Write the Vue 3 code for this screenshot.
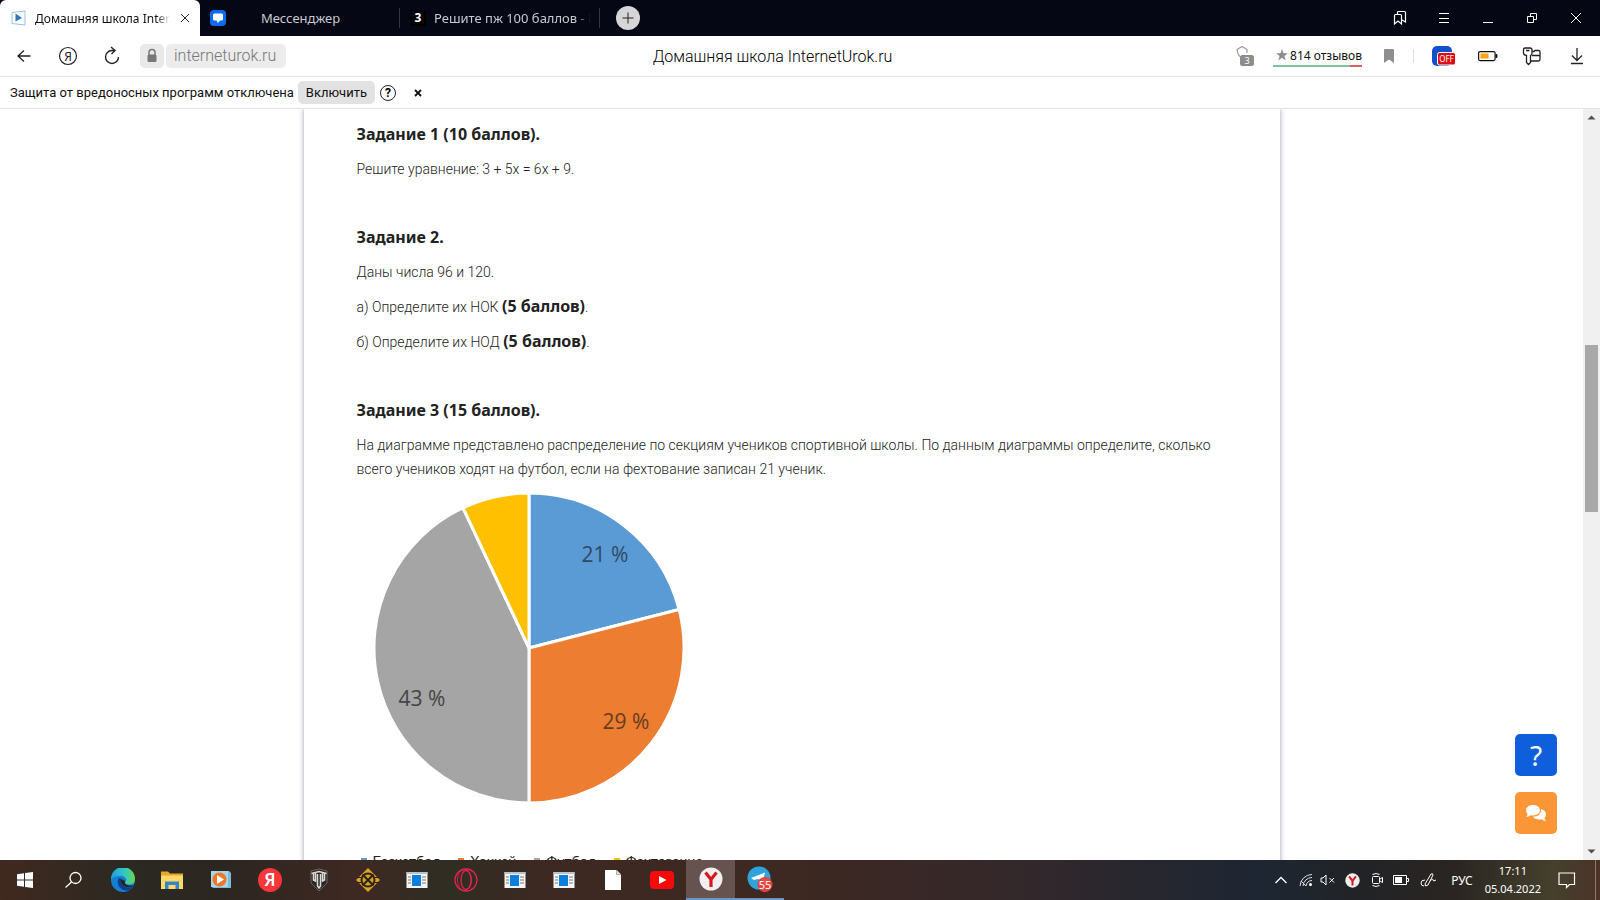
<template>
  <div class="desktop">
    <header class="tabs">
      <div class="tab active">
        <svg class="favicon" width="16" height="16" viewBox="0 0 16 16">
          <path d="M1 2.5L14 1V15L1 13.5Z" fill="#fff" stroke="#8cc4e8" stroke-width="1" />
          <path d="M4.5 3.5V11.5L11 8Z" fill="#2f78b4" />
        </svg>
        <span class="tab-title fade">Домашняя школа InternetUrok.ru</span>
        <button class="tab-close" aria-label="Закрыть">
          <svg width="10" height="10" viewBox="0 0 10 10"><path d="M1 1L9 9M9 1L1 9" stroke="#222" /></svg>
        </button>
      </div>
      <div class="tab messenger">
        <svg class="favicon" width="16" height="16" viewBox="0 0 16 16">
          <rect width="16" height="16" rx="4" fill="#0a6cf0" />
          <path d="M4.5 3.5H11.5Q13 3.5 13 5V9Q13 10.5 11.5 10.5H10L8 13L6.5 10.5H4.5Q3 10.5 3 9V5Q3 3.5 4.5 3.5Z" fill="#fff" />
        </svg>
        <span class="tab-title">Мессенджер</span>
      </div>
      <div class="tab">
        <span class="znanija">3</span>
        <span class="tab-title fade">Решите пж 100 баллов - Школьные Знания</span>
      </div>
      <button class="new-tab" aria-label="Новая вкладка">
        <svg width="12" height="12" viewBox="0 0 12 12"><path d="M6 0.5V11.5M0.5 6H11.5" stroke="#222" /></svg>
      </button>
      <div class="window-controls">
        <button aria-label="Коллекции">
          <svg width="16" height="16" viewBox="0 0 16 16" fill="none" stroke="#fff" stroke-width="1.2">
            <path d="M2.500 5.500Q2.500 4.500 3.500 4.500H8.500Q9.500 4.500 9.500 5.500V14L6 11L2.500 14Z" />
            <path d="M5.500 4V2.500Q5.500 1.500 6.500 1.500H12.500Q13.500 1.500 13.500 2.500V12L10 10" />
          </svg>
        </button>
        <button aria-label="Меню">
          <svg width="12" height="12" viewBox="0 0 12 12"><path d="M1 1.500H11M1 6.500H11M1 10.500H11" stroke="#fff" /></svg>
        </button>
        <button aria-label="Свернуть">
          <svg width="12" height="12" viewBox="0 0 12 12"><path d="M1 10.500H11" stroke="#fff" /></svg>
        </button>
        <button aria-label="Развернуть">
          <svg width="12" height="12" viewBox="0 0 12 12" fill="none" stroke="#fff">
            <path d="M1.500 4.500H7.500V10.500H1.500ZM4.500 4.500V1.500H10.500V7.500H7.500" />
          </svg>
        </button>
        <button aria-label="Закрыть окно">
          <svg width="12" height="12" viewBox="0 0 12 12"><path d="M1 1L11 11M11 1L1 11" stroke="#fff" /></svg>
        </button>
      </div>
    </header>

    <nav class="toolbar">
      <button class="nav-btn" aria-label="Назад">
        <svg width="18" height="18" viewBox="0 0 18 18" fill="none" stroke="#222" stroke-width="1.300"><path d="M15.500 9H3M9 3.500L3 9L9 14.500" /></svg>
      </button>
      <button class="nav-btn" aria-label="Яндекс">
        <svg width="20" height="20" viewBox="0 0 20 20">
          <circle cx="10" cy="10" r="8.500" fill="none" stroke="#222" stroke-width="1.200" />
          <text x="10" y="14.500" text-anchor="middle" font-size="12" fill="#222">Я</text>
        </svg>
      </button>
      <button class="nav-btn" aria-label="Обновить">
        <svg width="18" height="20" viewBox="0 0 18 20" fill="none" stroke="#222" stroke-width="1.400">
          <path d="M11 4.500H9A6.500 6.500 0 1 0 15.500 11M8 1L12 4.500L8.500 8" />
        </svg>
      </button>
      <span class="lock">
        <svg width="12" height="16" viewBox="0 0 12 16">
          <path d="M3 7V4.500A3 3 0 0 1 9 4.500V7" fill="none" stroke="#777" stroke-width="1.500" />
          <rect x="1.500" y="6.500" width="9" height="7.500" rx="1.500" fill="#777" />
        </svg>
      </span>
      <input class="url" type="text" value="interneturok.ru" aria-label="Адрес">
      <span class="page-title">Домашняя школа InternetUrok.ru</span>
      <span class="shield">
        <svg width="20" height="22" viewBox="0 0 20 22">
          <path d="M6.500 13Q2.500 10 2 4.500L7 1.500L12 4.500V8" fill="none" stroke="#999" stroke-width="1.200" />
          <rect x="5" y="10" width="14" height="11" rx="2.500" fill="#8c8c8c" />
          <text x="12" y="19" text-anchor="middle" font-size="9" fill="#fff">3</text>
        </svg>
      </span>
      <a class="reviews" href="#">
        <svg width="12" height="12" viewBox="0 0 12 12"><path d="M6 0L7.500 4.300H12L8.400 7L9.700 11.500L6 8.800L2.300 11.500L3.600 7L0 4.300H4.500Z" fill="#8c8c8c" /></svg>
        814 отзывов
      </a>
      <button class="bookmark" aria-label="Закладка">
        <svg width="10" height="14" viewBox="0 0 10 14"><path d="M0 1Q0 0 1 0H9Q10 0 10 1V14L5 10.500L0 14Z" fill="#8e8e8e" /></svg>
      </button>
      <button class="ext-btn vpn" aria-label="Расширение">
        <svg width="26" height="22" viewBox="0 0 26 22">
          <rect x="1" y="1" width="20" height="20" rx="5" fill="#1450cc" />
          <rect x="6.500" y="7.500" width="18" height="12.500" rx="2" fill="#dd0b12" stroke="#fff" />
          <text x="15.500" y="17" text-anchor="middle" font-size="8" fill="#fff">OFF</text>
        </svg>
      </button>
      <button class="ext-btn" aria-label="Энергосбережение">
        <svg width="20" height="12" viewBox="0 0 20 12">
          <rect x="0.600" y="1.600" width="16.500" height="9" rx="1.500" fill="none" stroke="#111" stroke-width="1.200" />
          <rect x="2.500" y="3.500" width="8" height="5" fill="#ffa20d" />
          <rect x="17.500" y="4" width="2" height="4" rx="1" fill="#111" />
        </svg>
      </button>
      <button class="ext-btn" aria-label="Пароли">
        <svg width="20" height="20" viewBox="0 0 20 20" fill="none" stroke="#222" stroke-width="1.300">
          <path d="M3 2H8Q10 2 10 4V7Q10 9 8.500 9.500V16.500L6.500 18.500L4.500 16.500V9.500Q1.500 9 1.500 7V4Q1.500 2 3 2ZM4 4.500H7.500" />
          <path d="M10 5.500H12L13 4.500H16.500Q18 4.500 18 6V13Q18 15 16.500 15H8.500M10 9.500H18" />
        </svg>
      </button>
      <button class="ext-btn" aria-label="Загрузки">
        <svg width="14" height="18" viewBox="0 0 14 18" fill="none" stroke="#222" stroke-width="1.300"><path d="M7 1V13M2 8.500L7 13.500L12 8.500M1 16.500H13" /></svg>
      </button>
    </nav>

    <div class="notice">
      <span>Защита от вредоносных программ отключена</span>
      <button class="enable">Включить</button>
      <button class="help" aria-label="Справка">?</button>
      <button class="dismiss" aria-label="Скрыть">
        <svg width="8" height="8" viewBox="0 0 8 8"><path d="M1 1L7 7M7 1L1 7" stroke="#111" stroke-width="1.800" /></svg>
      </button>
    </div>

    <div class="viewport">
      <main class="page">
        <article class="sheet">
          <section class="task">
            <h2>Задание 1 (10 баллов).</h2>
            <p>Решите уравнение: 3 + 5x = 6x + 9.</p>
          </section>
          <section class="task">
            <h2>Задание 2.</h2>
            <p>Даны числа 96 и 120.</p>
            <p>а) Определите их НОК <strong>(5 баллов)</strong>.</p>
            <p>б) Определите их НОД <strong>(5 баллов)</strong>.</p>
          </section>
          <section class="task">
            <h2>Задание 3 (15 баллов).</h2>
            <p>
              На диаграмме представлено распределение по секциям учеников спортивной школы. По данным диаграммы
              определите, сколько всего учеников ходят на футбол, если на фехтование записан 21 ученик.
            </p>
            <figure class="chart">
              <svg class="pie" width="312" height="312" viewBox="-156 -156 312 312">
                <path v-for="s in slices" :key="s.name" :d="s.path" :fill="s.color" stroke="#fff" stroke-width="3" stroke-linejoin="round" />
                <text
                  v-for="s in labelled"
                  :key="s.label"
                  :x="s.x"
                  :y="s.y"
                  :fill="s.ink"
                  text-anchor="middle"
                >{{ s.label }}</text>
              </svg>
              <ul class="legend">
                <li v-for="s in slices" :key="s.name">
                  <i :style="{ background: s.color }"></i>{{ s.name }}
                </li>
              </ul>
            </figure>
          </section>
        </article>
        <div class="floating">
          <button class="float-btn ask" aria-label="Помощь">?</button>
          <button class="float-btn chat" aria-label="Чат">
            <svg width="22" height="18" viewBox="0 0 22 18" fill="#fff">
              <path d="M8 1C12 1 15 3.200 15 6.300S12 11.500 8 11.500Q6.500 11.500 5.500 11.200Q3.500 13 1 13Q2.500 11.500 2.500 10Q1 8.500 1 6.300C1 3.200 4 1 8 1Z" />
              <path d="M16.300 5Q21 6.500 21 10.500Q21 12.500 19.500 14Q19.500 15.500 21 17Q18.500 17 16.500 15.300Q10.500 16.500 8 12.800Q16 12.500 16.300 5Z" />
            </svg>
          </button>
        </div>
      </main>
      <div class="scrollbar">
        <svg width="17" height="17" viewBox="0 0 17 17"><path d="M4.500 10.500L8.500 6.500L12.500 10.500Z" fill="#505050" /></svg>
        <span class="before"></span>
        <span class="thumb"></span>
        <span class="after"></span>
        <svg width="17" height="17" viewBox="0 0 17 17"><path d="M4.500 6.500L8.500 10.500L12.500 6.500Z" fill="#505050" /></svg>
      </div>
    </div>

    <footer class="taskbar">
      <button class="app" aria-label="Пуск">
        <svg width="16" height="16" viewBox="0 0 16 16" fill="#fff"><path d="M0 2.200L7 1.200V7.500H0ZM8 1.100L16 0V7.500H8ZM0 8.500H7V14.800L0 13.800ZM8 8.500H16V16L8 14.900Z" /></svg>
      </button>
      <button class="app" aria-label="Поиск">
        <svg width="18" height="18" viewBox="0 0 18 18" fill="none" stroke="#fff" stroke-width="1.300"><circle cx="10.500" cy="7" r="5.500" /><path d="M6.500 11L0.500 16.500" /></svg>
      </button>
      <button class="app" aria-label="Edge">
        <svg width="24" height="24" viewBox="0 0 24 24">
          <defs>
            <linearGradient id="edge-top" x1="0" x2="1"><stop offset="0" stop-color="#1c9fe0" /><stop offset="0.600" stop-color="#36c9c0" /><stop offset="1" stop-color="#66d64e" /></linearGradient>
          </defs>
          <circle cx="12" cy="12" r="12" fill="#1580d2" />
          <path d="M0 11A12 12 0 0 1 24 11Q24 16 18.500 16.500Q14 16.500 14 14.500Q16 13 15 10.500Q13 7 8 8Q3 8 0 11Z" fill="url(#edge-top)" />
          <path d="M8 10Q5 14 8.500 19Q12 23.500 18 22.300Q21 20.500 22.500 18Q17 21 13 18Q9 15 10.500 10.500Z" fill="#0c3f8c" />
          <path d="M10.500 11Q8.500 15 13 18Q17.500 20.500 22.500 18L23 17Q18 18.500 14.500 16Q13.500 15 14 13Z" fill="#29242a" />
        </svg>
      </button>
      <button class="app" aria-label="Проводник">
        <svg width="24" height="20" viewBox="0 0 24 20">
          <path d="M1 1.500H8L10 3.500H23V18H1Z" fill="#e6a925" />
          <path d="M1 5.500H23V19H1Z" fill="#ffd76a" />
          <path d="M5 19V11.500H19V19H15.500V15H8.500V19Z" fill="#3487c7" />
        </svg>
      </button>
      <button class="app" aria-label="Проигрыватель">
        <svg width="22" height="20" viewBox="0 0 22 20">
          <path d="M1 1H19L21 3V18H3L1 16Z" fill="#7dbbd6" />
          <rect x="1" y="1" width="17" height="16" fill="#a9d5e5" />
          <circle cx="9.500" cy="9.500" r="7" fill="#ed762a" />
          <path d="M7 5V14L14 9.500Z" fill="#fff" />
        </svg>
      </button>
      <button class="app" aria-label="Яндекс">
        <svg width="24" height="24" viewBox="0 0 24 24"><circle cx="12" cy="12" r="12" fill="#f8353b" /><text x="12" y="18" text-anchor="middle" font-size="17" font-weight="600" fill="#fff">Я</text></svg>
      </button>
      <button class="app" aria-label="World of Tanks">
        <svg width="18" height="24" viewBox="0 0 18 24">
          <path d="M1 3L9 1L17 3V15L9 23L1 15Z" fill="#2b2927" stroke="#77736e" stroke-width="0.800" />
          <path d="M1.500 5.500L9 3.500L16.500 5.500M3.500 5.500V12L5.500 13V5M14.500 5.500V12L12.500 13V5M7.500 6V18L9 20L10.500 18V6" stroke="#dedbd4" stroke-width="1.500" fill="none" />
        </svg>
      </button>
      <button class="app" aria-label="Crossout">
        <svg width="26" height="26" viewBox="0 0 26 26">
          <path d="M13 1L25 13L13 25L1 13Z" fill="#d6a329" />
          <circle cx="13" cy="13" r="6.500" fill="#d6a329" stroke="#2d2419" stroke-width="2" />
          <path d="M7.500 7.500L18.500 18.500M18.500 7.500L7.500 18.500" stroke="#2d2419" stroke-width="2.200" />
          <path d="M3 10.500H7M19 10.500H23M3 15.500H7M19 15.500H23" stroke="#2d2419" stroke-width="1.200" />
        </svg>
      </button>
      <button class="app" aria-label="Программа"><svg width="22" height="18" viewBox="0 0 22 18"><use href="#app-window" /></svg></button>
      <button class="app" aria-label="Opera">
        <svg width="24" height="24" viewBox="0 0 24 24" fill="none" stroke="#e0244e" stroke-width="1.300"><circle cx="12" cy="12" r="11" /><ellipse cx="12" cy="12" rx="5" ry="9.500" /><ellipse cx="10.500" cy="12" rx="7" ry="10.500" stroke-width="0.900" /></svg>
      </button>
      <button class="app" aria-label="Программа"><svg width="22" height="18" viewBox="0 0 22 18"><use href="#app-window" /></svg></button>
      <button class="app" aria-label="Программа"><svg width="22" height="18" viewBox="0 0 22 18"><use href="#app-window" /></svg></button>
      <button class="app" aria-label="Файл">
        <svg width="16" height="20" viewBox="0 0 16 20"><path d="M0 0H11.500L16 4.500V20H0Z" fill="#fff" /><path d="M11.500 0V4.500H16" fill="#ddd" stroke="#888" stroke-width="0.600" /></svg>
      </button>
      <button class="app" aria-label="YouTube">
        <svg width="24" height="18" viewBox="0 0 24 18"><rect width="24" height="18" rx="4" fill="#f80a0a" /><path d="M9 5V13L16.500 9Z" fill="#fff" /></svg>
      </button>
      <button class="app running focused" aria-label="Яндекс Браузер">
        <svg width="24" height="24" viewBox="0 0 24 24"><use href="#browser-logo" /></svg>
      </button>
      <button class="app running" aria-label="Telegram">
        <svg width="26" height="26" viewBox="0 0 26 26">
          <circle cx="12" cy="12" r="11.500" fill="#2fa3da" />
          <path d="M4 12L18 6.500L16 15L11 13L7 14Z" fill="#fff" />
          <circle cx="18" cy="18.500" r="7.500" fill="#e5433f" />
          <text x="18" y="22.500" text-anchor="middle" font-size="11" fill="#fff">55</text>
        </svg>
      </button>

      <div class="tray">
        <svg class="t-chevron" width="12" height="8" viewBox="0 0 12 8" fill="none" stroke="#fff" stroke-width="1.300"><path d="M0.500 7L6 1.500L11.500 7" /></svg>
        <svg class="t-wifi" width="14" height="14" viewBox="0 0 14 14" fill="none" stroke="#ddd"><path d="M1 13A12 12 0 0 1 13 1.500M4 13A9 9 0 0 1 13 4.500M7 13A6 6 0 0 1 13 7.500M2 8L7 13" /><circle cx="11.500" cy="11.500" r="1.500" fill="#fff" stroke="none" /></svg>
        <svg class="t-sound" width="16" height="14" viewBox="0 0 16 14" fill="none" stroke="#fff"><path d="M1 5H3L6 2V12L3 9H1ZM9.500 5L14 9.500M14 5L9.500 9.500" /></svg>
        <svg class="t-browser" width="15" height="15" viewBox="0 0 24 24"><use href="#browser-logo" /></svg>
        <svg class="t-cam" width="12" height="16" viewBox="0 0 12 16" fill="none" stroke="#fff"><rect x="1.500" y="4.500" width="7" height="7" rx="1" /><path d="M9 7L11.500 5.500V10.500L9 9M1.500 2.500Q5 0.500 8.500 2.500M1.500 13.500Q5 15.500 8.500 13.500" /></svg>
        <svg class="t-battery" width="16" height="10" viewBox="0 0 16 10"><path d="M0.500 0.500H13.500V9.500H0.500ZM14 3.500H15.500V6.500H14" fill="none" stroke="#fff" /><rect x="2" y="2" width="7" height="6" fill="#fff" /></svg>
        <svg class="t-pen" width="17" height="16" viewBox="0 0 17 16" fill="none" stroke="#fff"><path d="M5 12L11 2Q13 1 13 3L8 13L5.500 14ZM5 8Q1 8 1 11T4 14M10 9Q13 6 13 8T16 8" /></svg>
        <span class="lang">РУС</span>
        <time class="clock"><span>17:11</span><span>05.04.2022</span></time>
        <svg class="t-notes" width="18" height="18" viewBox="0 0 18 18" fill="none" stroke="#fff" stroke-width="1.200"><path d="M1 2H16.500V13.500H11.500L8.500 16.500V13.500H1Z" /></svg>
        <span class="show-desktop"></span>
      </div>
    </footer>

    <svg class="symbols" width="0" height="0" aria-hidden="true">
      <symbol id="app-window" viewBox="0 0 22 18">
        <rect x="0.500" y="1" width="21" height="16" fill="#f5f5f5" />
        <path d="M0.500 1H21.500V3H0.500Z" fill="#b9c2ca" />
        <rect x="6" y="4" width="9" height="11" fill="#0c7fdc" />
        <path d="M2 6H5M2 9H5M2 12H5M16 6H20M16 9H20M16 12H20" stroke="#777" />
      </symbol>
      <symbol id="browser-logo" viewBox="0 0 24 24">
        <circle cx="12" cy="12" r="11.500" fill="#f2f0ef" />
        <path d="M6.500 5.500L12 12.500L17.500 5.500M12 12V20" fill="none" stroke="#d6191f" stroke-width="3.200" />
      </symbol>
    </svg>
  </div>
</template>

<script setup>
const RADIUS = 155

const sections = [
  { name: 'Баскетбол', percent: 21, color: '#5b9bd5', label: '21 %', x: 76, y: -86, ink: '#2f4a63' },
  { name: 'Хоккей', percent: 29, color: '#ed7d31', label: '29 %', x: 97, y: 81, ink: '#663c20' },
  { name: 'Футбол', percent: 43, color: '#a5a5a5', label: '43 %', x: -107, y: 58, ink: '#444' },
  { name: 'Фехтование', percent: 7, color: '#ffc000' }
]

// точка на окружности, отсчёт от верха по часовой стрелке
const pointAt = (percent) => {
  const angle = (percent / 100) * Math.PI * 2
  return `${(RADIUS * Math.sin(angle)).toFixed(2)} ${(-RADIUS * Math.cos(angle)).toFixed(2)}`
}

let total = 0
const slices = sections.map((s) => {
  const from = pointAt(total)
  total += s.percent
  return { ...s, path: `M0 0L${from}A${RADIUS} ${RADIUS} 0 0 1 ${pointAt(total)}Z` }
})
const labelled = slices.filter((s) => s.label)
</script>

<style>
body {
  margin: 0;
}
</style>

<style scoped>
.desktop {
  display: flex;
  flex-direction: column;
  height: 100vh;
  overflow: hidden;
  background: #fff;
  color: #111;
  font-family: 'Noto Sans', 'Open Sans', sans-serif;
  font-size: 12px;
}

button {
  display: flex;
  align-items: center;
  justify-content: center;
  padding: 0;
  border: none;
  background: none;
  font-family: inherit;
  flex-shrink: 0;
}

svg {
  flex-shrink: 0;
}

.symbols {
  position: absolute;
}

/* вкладки */
.tabs {
  display: flex;
  align-items: center;
  height: 36px;
  flex-shrink: 0;
  background: #050714;
}

.tab {
  display: flex;
  align-items: center;
  gap: 8px;
  width: 200px;
  height: 20px;
  padding: 0 8px 0 10px;
  box-sizing: border-box;
  color: #c9cad0;
  font-size: 13px;
  border-right: 1px solid #34363f;
}

.tab.active {
  height: 36px;
  padding-left: 11px;
  background: #fff;
  color: #111;
  font-size: 12px;
  border: none;
  border-radius: 6px 6px 0 0;
}

.tab-title {
  flex: 1;
  overflow: hidden;
  white-space: nowrap;
}

.messenger .tab-title {
  margin-right: 24px;
  text-align: center;
}

.fade {
  mask-image: linear-gradient(90deg, #000 90%, transparent);
}

.tab-close {
  width: 14px;
  height: 14px;
}

.znanija {
  width: 16px;
  height: 16px;
  background: #000;
  color: #fff;
  font-size: 12px;
  font-weight: 700;
  line-height: 16px;
  text-align: center;
}

.new-tab {
  width: 24px;
  height: 24px;
  margin-left: 16px;
  border-radius: 50%;
  background: #d6d6d8;
}

.window-controls {
  display: flex;
  margin-left: auto;
  padding-right: 2px;
}

.window-controls button {
  width: 44px;
  height: 36px;
}

/* адресная строка */
.toolbar {
  display: flex;
  align-items: center;
  height: 40px;
  flex-shrink: 0;
  padding: 0 16px 0 2px;
  border-bottom: 1px solid #e2e2e2;
}

.nav-btn {
  width: 44px;
  height: 36px;
}

.lock {
  display: flex;
  align-items: center;
  justify-content: center;
  width: 24px;
  height: 24px;
  margin: 0 2px 0 6px;
  border-radius: 5px;
  background: #e9e9e9;
}

.url {
  width: 120px;
  height: 24px;
  padding: 0 0 2px 8px;
  box-sizing: border-box;
  border: none;
  border-radius: 5px;
  background: #ececec;
  color: #777;
  font-family: Roboto, sans-serif;
  font-size: 16px;
  font-weight: 300;
}

.page-title {
  flex: 1;
  margin-left: 24px;
  font-family: Roboto, sans-serif;
  font-size: 16px;
  font-weight: 300;
  color: #000;
  text-align: center;
}

.shield {
  display: flex;
}

.reviews {
  display: flex;
  align-items: center;
  gap: 2px;
  height: 19px;
  margin: 0 22px 0 18px;
  padding-left: 3px;
  color: #111;
  font-size: 12px;
  text-decoration: none;
  border-bottom: 2px solid;
  border-image: linear-gradient(90deg, #7cc49a 86%, #d95d62 86%) 1;
}

.bookmark {
  padding-right: 19px;
  border-right: 1px solid #ddd;
}

.ext-btn {
  width: 44px;
}

.ext-btn:last-child {
  width: 14px;
  margin-left: 16px;
}

.vpn {
  margin-left: 8px;
}

/* предупреждение */
.notice {
  display: flex;
  align-items: center;
  height: 31px;
  flex-shrink: 0;
  padding-left: 10px;
  border-bottom: 1px solid #e2e2e2;
  font-family: Roboto, sans-serif;
  font-size: 13px;
}

.enable {
  width: 77px;
  height: 23px;
  margin-left: 4px;
  border-radius: 5px;
  background: #e2e2e2;
  font-size: 13px;
  color: #111;
}

.help {
  width: 16px;
  height: 16px;
  margin-left: 5px;
  border: 1px solid #222;
  border-radius: 50%;
  font-size: 12px;
  font-weight: 700;
}

.dismiss {
  width: 20px;
  margin-left: 12px;
}

/* страница */
.viewport {
  display: flex;
  flex: 1;
  min-height: 0;
}

.page {
  position: relative;
  flex: 1;
  overflow: hidden;
}

.sheet {
  max-width: 976px;
  margin: 0 auto;
  padding: 13px 40px 0 53px;
  box-sizing: border-box;
  box-shadow: 0 0 5px rgba(60, 60, 110, 0.5);
  color: #222;
  font-family: Roboto, sans-serif;
  font-size: 14px;
  font-weight: 300;
  line-height: 24px;
}

.task {
  display: flex;
  flex-direction: column;
  gap: 11px;
  margin-bottom: 44px;
}

h2,
p,
figure,
ul {
  margin: 0;
  padding: 0;
}

h2,
strong {
  font-family: 'Noto Sans', sans-serif;
  font-size: 16px;
  font-weight: 700;
}

strong {
  line-height: 1;
}

.chart {
  padding-left: 16px;
  font-weight: 400;
}

.pie {
  display: block;
  font-family: 'Open Sans', sans-serif;
  font-size: 21px;
}

.legend {
  display: flex;
  gap: 18px;
  margin: 45px 0 0 -12px;
  list-style: none;
  font-family: Lato, sans-serif;
}

.legend li {
  display: flex;
  align-items: center;
  gap: 6px;
}

.legend i {
  width: 6px;
  height: 6px;
}

.floating {
  position: absolute;
  right: 26px;
  bottom: 26px;
  display: flex;
  flex-direction: column;
  gap: 16px;
}

.float-btn {
  width: 42px;
  height: 42px;
  border-radius: 5px;
}

.ask {
  background: #0f5fdc;
  color: #fff;
  font-size: 28px;
}

.chat {
  background: #fb9637;
}

.scrollbar {
  display: flex;
  flex-direction: column;
  align-items: center;
  width: 17px;
  background: #f0f0f0;
}

.before {
  flex: 219;
}

.thumb {
  flex: 167;
  width: 13px;
  background: #a8a8a8;
}

.after {
  flex: 331;
}

/* панель задач */
.taskbar {
  display: flex;
  height: 40px;
  flex-shrink: 0;
  background: linear-gradient(90deg, #40291f 0%, #2b2922 8%, #2c2621 14%, #3e2822 22%, #2f2e22 28%, #3d2822 34%, #3d2822 50%, #35282a 62%, #1d2632 79%, #222326 85%, #2a2522 91%, #45402c 97%, #4c3328 100%);
  color: #fff;
}

.app {
  width: 49px;
  height: 40px;
  box-sizing: border-box;
}

.running {
  border-bottom: 2px solid #6d94c4;
}

.focused {
  background: #66524f;
}

.tray {
  display: flex;
  align-items: center;
  margin-left: auto;
  padding-right: 4px;
}

.t-chevron {
  margin-right: 12px;
}

.t-wifi {
  margin-right: 7px;
}

.t-sound {
  margin-right: 9px;
}

.t-browser {
  margin-right: 11px;
}

.t-cam {
  margin-right: 10px;
}

.t-battery {
  margin-right: 11px;
}

.t-pen {
  margin-right: 14px;
}

.lang {
  font-size: 12px;
}

.clock {
  display: flex;
  flex-direction: column;
  align-items: center;
  margin: 0 17px 0 12px;
  font-size: 11px;
  line-height: 18px;
}

.t-notes {
  margin-right: 19px;
}

.show-desktop {
  height: 40px;
  border-left: 1px solid #8a7c72;
}
</style>
